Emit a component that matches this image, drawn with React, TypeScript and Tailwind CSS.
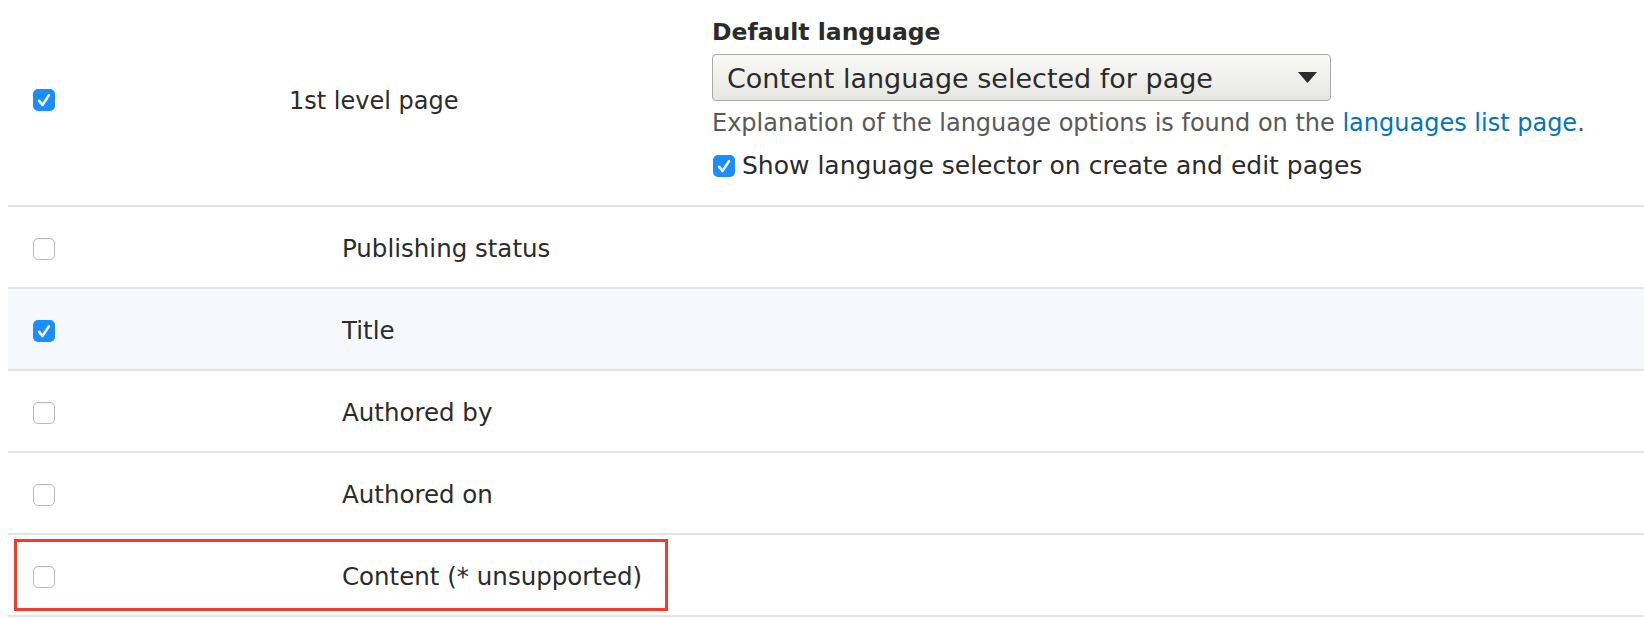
import clsx from "clsx";

type Field = { label: string; checked?: boolean; marked?: boolean };

const fields: Field[] = [
  { label: "Publishing status" },
  { label: "Title", checked: true },
  { label: "Authored by" },
  { label: "Authored on" },
  { label: "Content (* unsupported)", marked: true },
];

function Check({ checked }: { checked?: boolean }) {
  if (checked) {
    return (
      <span className="flex h-[22px] w-[22px] shrink-0 items-center justify-center rounded-[5px] bg-[#1a8dff]">
        <svg viewBox="0 0 22 22" className="h-[22px] w-[22px]">
          <path
            d="M6.2 11.8l3.4 4.1L15.9 6.4"
            fill="none"
            stroke="#fff"
            strokeWidth="2.6"
            strokeLinecap="round"
            strokeLinejoin="round"
          />
        </svg>
      </span>
    );
  }
  return (
    <span className="block h-[22px] w-[22px] shrink-0 rounded-[5px] border border-[#b8b8b8] bg-white shadow-[inset_0_1px_1px_rgba(0,0,0,0.05)]" />
  );
}

export default function App() {
  return (
    <div className="min-h-[618px] bg-white pl-[8px] font-['DejaVu_Sans',sans-serif] text-[#2b2b2b]">
      {/* top row: the page itself with its language settings */}
      <div className="flex h-[207px] items-center border-b-2 border-[#e6e4df] pb-[5px]">
        <div className="w-[281px] pl-[25px]">
          <Check checked />
        </div>
        <div className="w-[423px] pt-[1px] text-[24px] leading-[36px]">1st level page</div>
        <div className="flex flex-col self-start pt-[18px]">
          <div className="text-[23.5px] font-bold leading-[28px]">Default language</div>
          <div className="mt-[8px] flex h-[47px] w-[619px] items-center justify-between rounded-[4px] border border-[#a8a8a8] bg-gradient-to-b from-[#f8f8f6] to-[#e7e7e2] pl-[14px] pr-[13px]">
            <span className="mt-[3px] text-[27px] leading-[32px]">Content language selected for page</span>
            <svg viewBox="0 0 19 11" className="h-[11px] w-[19px]">
              <polygon points="0,0 19,0 9.5,11" fill="#2b2b2b" />
            </svg>
          </div>
          <div className="mt-[4px] text-[24px] leading-[36px] text-[#595959]">
            Explanation of the language options is found on the{" "}
            <a href="#" className="text-[#0074bd]">
              languages list page
            </a>
            .
          </div>
          <div className="mt-[7px] flex items-center gap-[7px] pl-[1px] text-[25px] leading-[36px]">
            <Check checked />
            <span>Show language selector on create and edit pages</span>
          </div>
        </div>
      </div>

      {fields.map((f) => (
        <div
          key={f.label}
          className={clsx(
            "relative flex h-[82px] items-center border-b-2 border-[#e6e4df] pt-[3px]",
            f.checked && "bg-[#f5f9fe]"
          )}
        >
          <div className="w-[281px] pl-[25px]">
            <Check checked={f.checked} />
          </div>
          <div className="pl-[53px] text-[24.5px] leading-[36px]">{f.label}</div>
          {f.marked && (
            <div className="pointer-events-none absolute bottom-[4px] left-[6px] top-[4px] w-[654px] border-[3px] border-[#f5392d]" />
          )}
        </div>
      ))}
    </div>
  );
}
